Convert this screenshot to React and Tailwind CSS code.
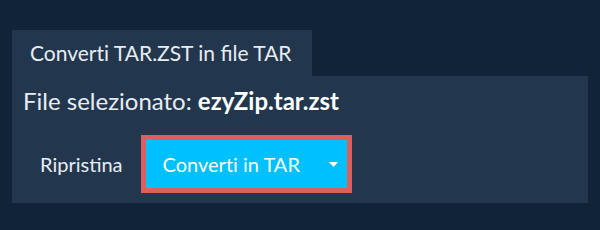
export default function App() {
  return (
    <div className="w-[600px] h-[230px] bg-[#112339] pt-[30px] px-3 font-['Lato',sans-serif]">
      <div className="inline-flex h-[46px] items-center bg-[#22374d] pl-[18px] pr-[20px] text-[21px] text-[#e8edf2] whitespace-pre">
        <span className="[font-variant-ligatures:no-common-ligatures]">Converti</span> TAR.ZST in file TAR
      </div>
      <div className="bg-[#22374d] h-[127px] pt-[9px] px-[11px]">
        <div className="text-[24px] text-[#e8edf2] leading-[32px]">
          File selezionato: <span className="font-bold text-white">ezyZip.tar.zst</span>
        </div>
        <div className="flex items-center mt-[18px]">
          <button className="pl-[17px] pr-[18px] text-[20px] text-[#e8edf2] h-[48px]">Ripristina</button>
          <div className="border-[5px] border-[#da5f5d]">
            <button className="flex items-center h-[48px] w-[201px] bg-[#00c0ff] text-white text-[20px] pl-[17px]">
              <span className="[font-variant-ligatures:no-common-ligatures]">Converti in TAR</span>
              <svg className="ml-[29px]" width="9" height="5" viewBox="0 0 9 5">
                <path d="M0 0h9L4.5 5z" fill="#fff" />
              </svg>
            </button>
          </div>
        </div>
      </div>
    </div>
  );
}
